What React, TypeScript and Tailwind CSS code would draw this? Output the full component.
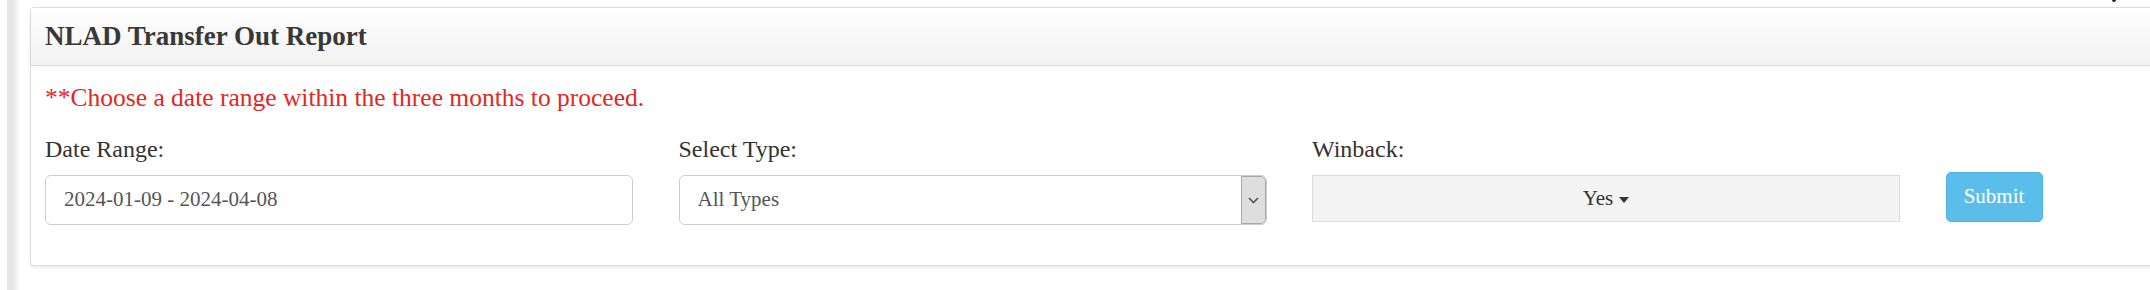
import React from "react";

const serif = { fontFamily: '"Liberation Serif", "Times New Roman", serif' };

function Label({ children }: { children: React.ReactNode }) {
  return <div className="text-[24px] leading-[30px] text-[#333]">{children}</div>;
}

export default function App() {
  return (
    <div className="flex h-[290px] w-[2150px] overflow-hidden bg-white" style={serif}>
      {/* left edge strip */}
      <div className="w-[7px] shrink-0" />
      <div className="w-[13px] shrink-0 bg-linear-to-r from-[#e6e6e6] from-50% to-white" />
      <div className="w-[10px] shrink-0" />

      <div className="flex w-[2140px] shrink-0 flex-col">
        {/* stray glyph from content above */}
        <div className="flex h-[7px] justify-end pr-[54px]">
          <div className="h-[2px] w-[4px] rounded-b-full bg-[#222]" />
        </div>

        {/* panel */}
        <div className="rounded-[4px] border border-[#dddddd] bg-white shadow-[0_2px_3px_rgba(0,0,0,0.08)]">
          {/* heading */}
          <div className="h-[58px] border-b border-[#dddddd] bg-linear-to-b from-white to-[#f1f1f1] pl-[14px] pt-[13px] shadow-[0_2px_4px_rgba(0,0,0,0.04)]">
            <h3 className="text-[27px] font-bold leading-[30px] text-[#383838]">NLAD Transfer Out Report</h3>
          </div>

          {/* body */}
          <div className="pl-[14px] pt-[17px] pb-[40px]">
            <p className="text-[25.5px] leading-[30px] text-[#e3271f]">
              **Choose a date range within the three months to proceed.
            </p>

            <div className="mt-[21px] flex items-start gap-[45.5px]">
              <div className="w-[588px] shrink-0">
                <Label>Date Range:</Label>
                <div className="mt-[11px] flex h-[50px] items-center rounded-[6px] border border-[#cccccc] pl-[18px] text-[21px] text-[#555]">
                  2024-01-09 - 2024-04-08
                </div>
              </div>

              <div className="w-[588px] shrink-0">
                <Label>Select Type:</Label>
                <div className="mt-[11px] flex h-[50px] items-stretch overflow-hidden rounded-[6px] border border-[#cccccc]">
                  <div className="flex flex-1 items-center pl-[18px] text-[21px] text-[#555]">All Types</div>
                  <div className="flex w-[25px] items-center justify-center rounded-r-[5px] border border-[#a8a8a8] bg-[#dedede]">
                    <svg width="11" height="7" viewBox="0 0 11 7" fill="none">
                      <path d="M1 1l4.5 4.5L10 1" stroke="#555" strokeWidth="1.6" />
                    </svg>
                  </div>
                </div>
              </div>

              <div className="w-[588px] shrink-0">
                <Label>Winback:</Label>
                <div className="mt-[11px] flex h-[47px] items-center justify-center gap-[6px] border border-[#dcdcdc] bg-[#f4f4f4] text-[21px] text-[#333]">
                  <span>Yes</span>
                  <span className="mt-[2px] h-0 w-0 border-x-[5.5px] border-t-[6px] border-x-transparent border-t-[#333]" />
                </div>
              </div>

              <div className="shrink-0 pt-[38px]">
                <button className="flex h-[50px] w-[97px] items-center justify-center rounded-[5px] border border-[#4fb3df] bg-[#5bbeea] text-[21px] text-white">
                  Submit
                </button>
              </div>
            </div>
          </div>
        </div>
      </div>
    </div>
  );
}
